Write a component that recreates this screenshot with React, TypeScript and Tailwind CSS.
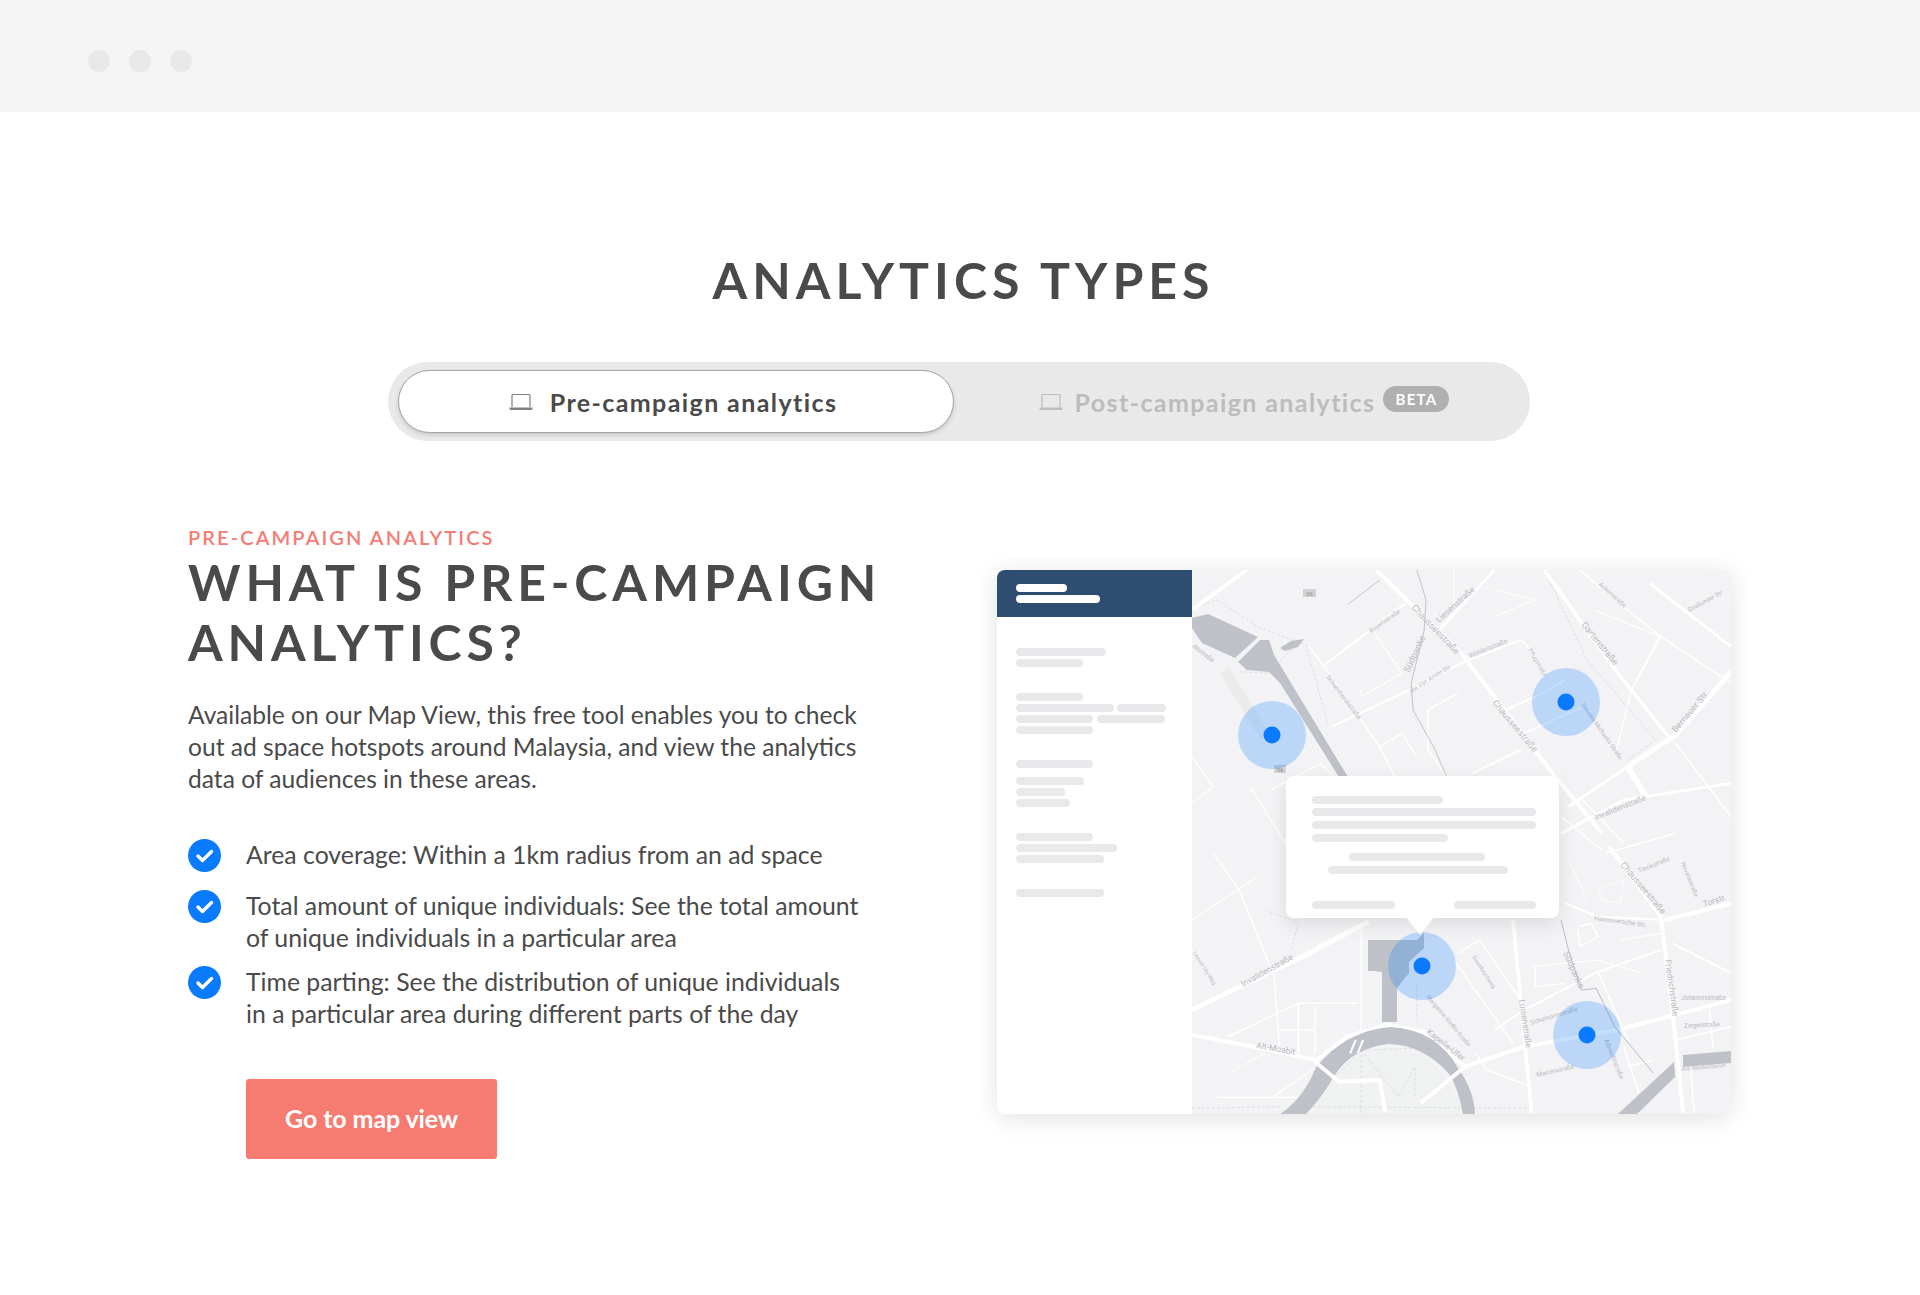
import React from 'react';

// zoom crops were read off at 2.703x / 3x, these bring points into map space
const toMap = (pts: string, offsetY: number) =>
  pts
    .trim()
    .split(/\s+/)
    .map((p) => {
      const [x, y] = p.split(',').map(Number);
      return `${(x / 2.703 - 12).toFixed(1)},${(y / 3 + offsetY).toFixed(1)}`;
    })
    .join(' ');

const TOP = -20;
const BOTTOM = 270;

const roads: [string, number, number][] = [
  // main roads
  ['530,60 760,310 1000,660 1140,850', TOP, 4],
  ['1160,20 1300,230 1330,500 1360,818', BOTTOM, 4],
  ['32,180 180,60', TOP, 4],
  ['985,60 1170,350 1320,560', TOP, 3.5],
  ['1210,650 1340,555 1490,365', TOP, 5],
  ['1210,650 1050,770', TOP, 3],
  ['1030,850 1200,750 1490,700', TOP, 3],
  ['1210,650 1260,740', TOP, 6],
  ['1270,100 1490,290', TOP, 3],
  ['1080,60 1210,180 1300,260 1490,400', TOP, 1.5],
  ['700,240 850,60', TOP, 3],
  ['390,345 610,160', TOP, 2.5],
  ['410,530 620,420 760,340 920,270 940,290 985,380', TOP, 2],
  ['350,290 390,350 540,590 590,700', TOP, 1.5],
  ['790,670 920,600', TOP, 2],
  ['880,480 980,430 1040,390', TOP, 2],
  ['930,550 1090,470', TOP, 2],
  ['670,480 750,430', TOP, 1.5],
  ['670,480 670,600 720,680', TOP, 1.5],
  ['520,240 600,370 490,440 490,420', TOP, 1.2],
  ['540,590 600,550 640,620', TOP, 1.5],
  ['1340,580 1490,800', TOP, 1.5],
  ['1080,740 1200,880', TOP, 1.5],
  ['1120,180 1300,260 1220,420 1180,600', TOP, 1.2],
  ['1300,250 1230,400', TOP, 1.2],
  ['850,120 960,150 850,200', TOP, 1],
  ['740,60 740,170', TOP, 1.2],
  ['190,710 290,890', TOP, 1.2],
  ['32,620 90,710 32,760', TOP, 1.2],
  ['245,720 380,640 450,720', TOP, 1.5],
  ['1030,800 1140,900', TOP, 1.5],
  ['32,510 330,350 510,245', BOTTOM, 5],
  ['32,585 200,620 370,660', BOTTOM, 4],
  ['370,660 450,590 560,555 660,575 770,680', BOTTOM, 4],
  ['770,680 930,620 1180,570 1320,530 1490,480', BOTTOM, 4],
  ['1310,240 1490,190', BOTTOM, 4],
  ['900,240 950,818', BOTTOM, 3.5],
  ['1040,190 1130,230 1310,240', BOTTOM, 2],
  ['850,570 930,510 1130,395 1300,330', BOTTOM, 2],
  ['1330,310 1490,400', BOTTOM, 2],
  ['750,340 810,300 920,480', BOTTOM, 1.5],
  ['740,360 900,610', BOTTOM, 1.5],
  ['90,40 160,150 255,410 270,650', BOTTOM, 1.5],
  ['32,240 210,110', BOTTOM, 1.2],
  ['130,590 320,490 480,490', BOTTOM, 1.5],
  ['320,490 320,640', BOTTOM, 2],
  ['365,500 365,640', BOTTOM, 1.5],
  ['270,570 365,570', BOTTOM, 1.5],
  ['490,270 490,620', BOTTOM, 1.5],
  ['1130,395 1210,600', BOTTOM, 1.5],
  ['1130,150 1200,120 1190,190 1140,180 1130,150', BOTTOM, 0.8],
  ['1080,260 1110,250 1130,290 1080,320 1075,270', BOTTOM, 1.5],
  ['950,380 1130,360 1250,400', BOTTOM, 1.2],
  ['1150,40 1340,-20', BOTTOM, 1.5],
  ['1050,60 1100,180', BOTTOM, 1],
  ['1340,600 1490,560', BOTTOM, 1.5],
  ['1430,490 1440,620', BOTTOM, 1.5],
  ['1380,680 1390,818', BOTTOM, 1.5],
  ['1210,680 1280,660', BOTTOM, 1.5],
  ['1200,620 1240,760', BOTTOM, 1.5],
  ['130,700 230,640', BOTTOM, 1],
  ['100,772 340,772', BOTTOM, 1.2],
  ['250,772 370,680', BOTTOM, 1.2],
  ['800,640 830,690 950,740', BOTTOM, 1.5],
  ['960,380 960,440 1040,430', BOTTOM, 1.2],
  ['1190,300 1300,280', BOTTOM, 1.2],
];

const dashed: [string, number][] = [
  ['60,165 100,150 210,230 340,285 400,520', TOP],
  ['985,60 1100,330 1285,570 1210,630', TOP],
  ['160,365 240,370 300,300', TOP],
  ['230,210 320,250 300,330', BOTTOM],
  ['430,700 490,630 640,625 760,700', BOTTOM],
  ['490,630 490,818', BOTTOM],
  ['490,630 590,770 635,680 635,770', BOTTOM],
  ['32,805 270,800', BOTTOM],
  ['360,800 950,805', BOTTOM],
  ['640,430 640,540', BOTTOM],
];

const thinGrey: [string, number, string][] = [
  ['640,60 665,150 660,240 625,400 630,480 690,600 720,680', TOP, '#bdbdc2'],
  ['455,162 540,90', TOP, '#bdbdc2'],
  ['1030,240 1050,330 1085,450 1125,445 1175,560 1280,700', BOTTOM, '#b5b5ba'],
];

const labels: [string, number, number, number, number][] = [
  ['Chausseestraße', 219, 38, 46, 9],
  ['Chausseestraße', 300, 133, 50, 9],
  ['Liesenstraße', 247, 53, -42, 8.5],
  ['Gartenstraße', 389, 55, 51, 9],
  ['Bernauer Str.', 484, 163, -50, 9],
  ['Invalidenstraße', 404, 250, -22, 8],
  ['Ackerstraße', 406, 15, 42, 6.5],
  ['Straßunder Str', 497, 42, -28, 6],
  ['Scharnhorststraße', 134, 107, 53, 6.5],
  ['Boyenstraße', 179, 63, -35, 6.5],
  ['Südpanke', 217, 103, -65, 9],
  ['Ida Von Arnim Str.', 219, 123, -32, 6],
  ['Wöhlertstraße', 278, 88, -22, 6.5],
  ['Pflugstraße', 336, 80, 60, 6],
  ['Dorotea Michaelis-Straße', 389, 135, 55, 6],
  ['destraße', 0, 77, 38, 6.5],
  ['Invalidenstraße', 51, 417, -29, 8.5],
  ['Alt-Moabit', 64, 478, 10, 8.5],
  ['Kapelle-Ufer', 234, 463, 38, 8.5],
  ['Luisenstraße', 327, 430, 82, 8.5],
  ['Friedrichstraße', 473, 390, 82, 8.5],
  ['Chausseestraße', 428, 295, 50, 9],
  ['Südpanke', 371, 383, 66, 9],
  ['Schumannstraße', 339, 455, -17, 6.5],
  ['Marienstraße', 345, 507, -13, 6.5],
  ['Albrechtstraße', 412, 470, 68, 6.5],
  ['Johannisstraße', 489, 430, 0, 6.5],
  ['Ziegelstraße', 492, 458, -3, 6.5],
  ['Am Weidendamm', 490, 501, -5, 5.6],
  ['Torstr.', 512, 337, -18, 8.5],
  ['Hannoversche Str.', 402, 350, 8, 6.5],
  ['Tieckstraße', 447, 303, -22, 6.5],
  ['Novalisstraße', 489, 293, 68, 6],
  ['Margarete-Steffin-Straße', 234, 427, 50, 6],
  ['Sauerbruchweg', 280, 387, 57, 5.5],
  ['Lesser-Ury-Weg', 1, 383, 58, 5.5],
];

const pins = [
  [80, 165],
  [374, 132],
  [230, 396],
  [395, 465],
];

function MapDrawing() {
  return (
    <svg viewBox="0 0 539 544" className="h-full w-full block">
      <rect width="539" height="544" fill="#f3f3f5" />
      <path d="M122 544 Q150 478 198 478 Q250 480 270 544 Z" fill="#eff2f0" />
      {/* pale strip next to the canal */}
      <polyline points={toMap('120,360 230,560', TOP)} stroke="#ebebec" strokeWidth="11" fill="none" />
      {dashed.map(([d, off], i) => (
        <polyline key={i} points={toMap(d, off)} fill="none" stroke="#d4d4d8" strokeWidth="0.7" strokeDasharray="3 2" />
      ))}
      {roads.map(([d, off, w], i) => (
        <polyline key={i} points={toMap(d, off)} fill="none" stroke="#ffffff" strokeWidth={w} strokeLinejoin="round" />
      ))}
      {thinGrey.map(([d, off, c], i) => (
        <polyline key={i} points={toMap(d, off)} fill="none" stroke={c} strokeWidth="0.9" />
      ))}
      {/* water */}
      <g fill="#bfc1c8">
        <polygon points="0,48 16,44 66,67 43,88 10,73 0,58" />
        <polygon points="68,70 77,70 82,85 156,207 147,207 88,113 77,102 55,100 46,92" />
        <polygon points="88,78 99,71 112,69 106,77 93,81" />
        <polygon points="176,370 225,370 232,363 232,378 217,392 217,403 205,418 205,452 190,452 190,402 182,401 176,401" />
        <path d="M88 544 Q112 528 124 497 Q155 460 199 457 Q245 460 266 498 Q282 520 283 544 L271 544 Q266 518 258 505 Q232 475 197 474 Q160 478 143 505 Q128 530 114 544 Z" />
        <polygon points="426,544 482,492 483,507 445,544" />
        <polygon points="491,485 539,481 539,493 491,497" />
      </g>
      <g stroke="#ffffff" fill="none" strokeLinejoin="round">
        <polyline points={toMap('460,640 475,600', BOTTOM)} strokeWidth="2" />
        <polyline points={toMap('480,640 495,600', BOTTOM)} strokeWidth="2" />
        <polyline points={toMap('365,665 430,725 540,720 555,818', BOTTOM)} strokeWidth="4" />
        <polyline points={toMap('650,790 770,680', BOTTOM)} strokeWidth="4" />
      </g>
      <g fill="#b9b9be" fontFamily="Roboto, sans-serif">
        {labels.map(([t, x, y, a, s], i) => (
          <text key={i} x={x} y={y} fontSize={s} transform={`rotate(${a} ${x} ${y})`}>
            {t}
          </text>
        ))}
      </g>
      <g fontFamily="Roboto, sans-serif" fontSize="6" fill="#8f8f8f" textAnchor="middle">
        <rect x="111" y="19" width="13" height="8" fill="#d2d2d4" />
        <text x="117.5" y="25.5">96</text>
        <rect x="82" y="195" width="12" height="8" fill="#d2d2d4" />
        <text x="88" y="201.5">96</text>
      </g>
      {pins.map(([x, y]) => (
        <g key={x}>
          <circle cx={x} cy={y} r="34" fill="#0a7aff" fillOpacity="0.24" />
          <circle cx={x} cy={y} r="8.5" fill="#0a7aff" />
        </g>
      ))}
    </svg>
  );
}

function Bar({ w, light }: { w: string; light?: boolean }) {
  return <div className={`h-2 rounded-full ${w} ${light ? 'bg-white' : 'bg-[#e9e9eb]'}`} />;
}

function Laptop({ color }: { color: string }) {
  return (
    <svg width="24" height="18" viewBox="0 0 24 18" fill="none" className="shrink-0">
      <path d="M3 14V2.5A1 1 0 0 1 4 1.5H20A1 1 0 0 1 21 2.5V14" stroke={color} strokeWidth="1.2" />
      <path d="M0.5 14.5H23.5V15.5A1.5 1.5 0 0 1 22 17H2A1.5 1.5 0 0 1 0.5 15.5Z" fill={color} />
    </svg>
  );
}

function Check() {
  return (
    <svg width="33" height="33" viewBox="0 0 33 33" className="shrink-0">
      <circle cx="16.5" cy="16.5" r="16.5" fill="#0a7aff" />
      <path d="M10 17L14.5 21.5L23.5 12.5" fill="none" stroke="#ffffff" strokeWidth="3.4" strokeLinecap="round" strokeLinejoin="round" />
    </svg>
  );
}

export default function App() {
  return (
    <div className="min-h-[1295px] bg-white text-[#4a4a4a] font-['Lato',sans-serif]">
      {/* Window bar */}
      <div className="h-[112px] bg-[#f5f5f5] flex items-center gap-[19px] pl-[88px] pt-[10px]">
        <div className="w-[22px] h-[22px] rounded-full bg-[#e8e8e8]" />
        <div className="w-[22px] h-[22px] rounded-full bg-[#e8e8e8]" />
        <div className="w-[22px] h-[22px] rounded-full bg-[#e8e8e8]" />
      </div>

      <h1 className="mt-[138px] h-[60px] pl-[7px] text-center text-[50px] leading-[60px] font-bold tracking-[5px]">ANALYTICS TYPES</h1>

      {/* Tabs */}
      <div className="mt-[52px] ml-[388px] w-[1142px] h-[79px] rounded-full bg-[#e9e9e9] flex items-center pl-[10px]">
        <div className="w-[556px] h-[63px] rounded-full bg-white border border-[#a3a3a3] shadow-[0_2px_4px_rgba(0,0,0,0.15)] flex items-center justify-center gap-[17px] text-[25px] font-bold tracking-[1.4px] pr-[6px]">
          <Laptop color="#808080" />
          <span className="mt-[2px]">Pre-campaign analytics</span>
        </div>
        <div className="flex-1 flex items-center justify-center gap-[10px] text-[25px] font-bold tracking-[1.4px] text-[#bcbcbc] pl-[4px]">
          <Laptop color="#bcbcbc" />
          <span className="mt-[2px] ml-[2px]">Post-campaign analytics</span>
          <span className="w-[66px] h-[26px] -mt-[6px] -ml-[2px] rounded-full bg-[#b0b0b0] text-white text-[15px] leading-[26px] text-center tracking-[1.2px]">BETA</span>
        </div>
      </div>

      {/* Content */}
      <div className="mt-[84px] pl-[188px] flex">
        <div className="w-[809px]">
          <div className="text-[20px] leading-6 font-semibold tracking-[2.1px] text-[#f47c72]">PRE-CAMPAIGN ANALYTICS</div>
          <h2 className="mt-[3px] text-[50px] leading-[60px] font-bold tracking-[4.88px] w-[760px]">WHAT IS PRE-CAMPAIGN ANALYTICS?</h2>
          <p className="mt-[27px] text-[24.6px] leading-8 w-[700px]">
            Available on our Map View, this free tool enables you to check out ad space hotspots around Malaysia, and view the analytics data of audiences in these areas.
          </p>
          <ul className="mt-[44px] flex flex-col">
            <li className="flex gap-[25px]">
              <Check />
              <span className="text-[24.8px] leading-8">Area coverage: Within a 1km radius from an ad space</span>
            </li>
            <li className="flex gap-[25px] mt-[18px]">
              <Check />
              <span className="text-[24.8px] leading-8">
                Total amount of unique individuals: See the total amount
                <br />
                of unique individuals in a particular area
              </span>
            </li>
            <li className="flex gap-[25px] mt-[12px]">
              <Check />
              <span className="text-[24.8px] leading-8">
                Time parting: See the distribution of unique individuals
                <br />
                in a particular area during different parts of the day
              </span>
            </li>
          </ul>
          <button className="mt-[49px] ml-[58px] w-[251px] h-[80px] rounded-[3px] bg-[#f67c72] text-white text-[25px] font-bold tracking-[-0.1px]">Go to map view</button>
        </div>

        {/* Map preview */}
        <div className="relative mt-[45px] w-[734px] h-[544px] flex rounded-lg bg-white overflow-hidden shadow-[0_4px_24px_rgba(0,0,0,0.12)]">
          <div className="w-[195px] shrink-0">
            <div className="h-[47px] bg-[#2f4d70] flex flex-col justify-center gap-[3px] pl-[19px]">
              <Bar w="w-[51px]" light />
              <Bar w="w-[84px]" light />
            </div>
            <div className="pl-[19px] pt-[31px] flex flex-col">
              <div className="flex flex-col gap-[3px]">
                <Bar w="w-[90px]" />
                <Bar w="w-[67px]" />
              </div>
              <div className="mt-[26px] flex flex-col gap-[3px]">
                <Bar w="w-[67px]" />
                <div className="flex gap-[3px]">
                  <Bar w="w-[98px]" />
                  <Bar w="w-[49px]" />
                </div>
                <div className="flex gap-[4px]">
                  <Bar w="w-[77px]" />
                  <Bar w="w-[68px]" />
                </div>
                <Bar w="w-[77px]" />
              </div>
              <div className="mt-[26px]">
                <Bar w="w-[77px]" />
              </div>
              <div className="mt-[9px] flex flex-col gap-[3px]">
                <Bar w="w-[68px]" />
                <Bar w="w-[49px]" />
                <Bar w="w-[54px]" />
              </div>
              <div className="mt-[26px] flex flex-col gap-[3px]">
                <Bar w="w-[77px]" />
                <Bar w="w-[101px]" />
                <Bar w="w-[88px]" />
              </div>
              <div className="mt-[26px]">
                <Bar w="w-[88px]" />
              </div>
            </div>
          </div>
          <div className="flex-1 h-full">
            <MapDrawing />
          </div>

          {/* Popup over the map */}
          <div className="absolute left-[289px] top-[206px] w-[273px] h-[142px] rounded-lg bg-white shadow-[0_6px_20px_rgba(0,0,0,0.1)] pl-[26px] pr-[23px] pt-[20px]">
            <Bar w="w-[131px]" />
            <div className="mt-[4px]"><Bar w="w-[224px]" /></div>
            <div className="mt-[5px]"><Bar w="w-[224px]" /></div>
            <div className="mt-[5px]"><Bar w="w-[136px]" /></div>
            <div className="mt-[11px] ml-[37px]"><Bar w="w-[136px]" /></div>
            <div className="mt-[5px] ml-[16px]"><Bar w="w-[180px]" /></div>
            <div className="mt-[27px] flex justify-between">
              <Bar w="w-[83px]" />
              <Bar w="w-[82px]" />
            </div>
            <svg width="28" height="18" viewBox="0 0 28 18" className="absolute left-[120px] top-[141px]">
              <polygon points="0,0 28,0 14,18" fill="#ffffff" />
            </svg>
          </div>
        </div>
      </div>
    </div>
  );
}
